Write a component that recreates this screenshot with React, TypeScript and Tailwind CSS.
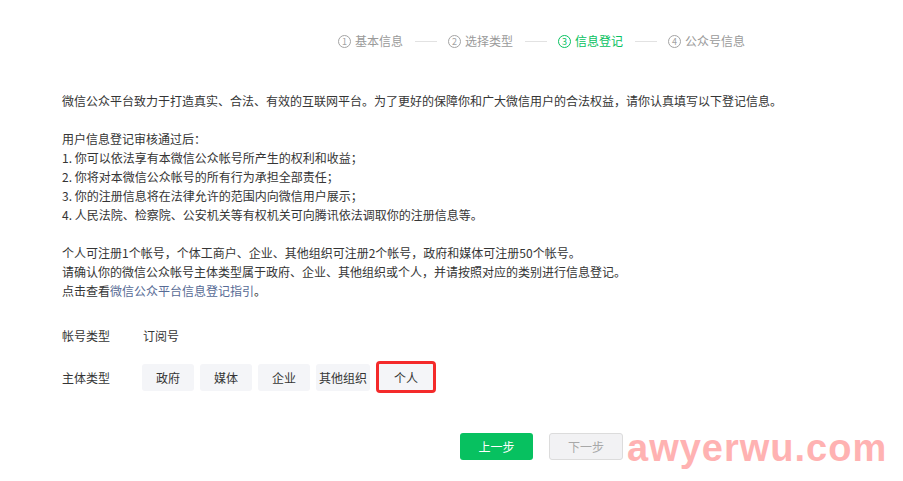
import React from "react";

const steps = [
  { n: "1", label: "基本信息" },
  { n: "2", label: "选择类型" },
  { n: "3", label: "信息登记", active: true },
  { n: "4", label: "公众号信息" },
];

const types = ["政府", "媒体", "企业", "其他组织"];

export default function App() {
  return (
    <div className="relative w-[903px] h-[481px] bg-white text-[#353535] font-['Noto_Sans_CJK_SC','Noto_Sans',sans-serif] overflow-hidden">
      {/* step indicator */}
      <div className="flex items-center pl-[338px] pt-[32px] h-[50px] text-[12px] leading-[18px]">
        {steps.map((s, i) => (
          <div key={s.n} className="flex items-center">
            {i > 0 && <div className="w-[22px] h-px bg-[#e2e2e2] ml-[12px] mr-[11px]" />}
            <span
              className={
                s.active
                  ? "flex items-center justify-center w-[13px] h-[13px] rounded-full border border-[#07c160] text-[9px] leading-none text-[#07c160]"
                  : "flex items-center justify-center w-[13px] h-[13px] rounded-full border border-[#a3a3a3] text-[9px] leading-none text-[#a3a3a3]"
              }
            >
              {s.n}
            </span>
            <span className={s.active ? "ml-[4px] text-[#07c160]" : "ml-[4px] text-[#9a9a9a]"}>
              {s.label}
            </span>
          </div>
        ))}
      </div>

      {/* notice */}
      <div className="pl-[62px] mt-[41px] text-[12px] leading-[19px]">
        <p>微信公众平台致力于打造真实、合法、有效的互联网平台。为了更好的保障你和广大微信用户的合法权益，请你认真填写以下登记信息。</p>
        <br />
        <p>用户信息登记审核通过后：</p>
        <p>1. 你可以依法享有本微信公众帐号所产生的权利和收益；</p>
        <p>2. 你将对本微信公众帐号的所有行为承担全部责任；</p>
        <p>3. 你的注册信息将在法律允许的范围内向微信用户展示；</p>
        <p>4. 人民法院、检察院、公安机关等有权机关可向腾讯依法调取你的注册信息等。</p>
        <br />
        <p>个人可注册1个帐号，个体工商户、企业、其他组织可注册2个帐号，政府和媒体可注册50个帐号。</p>
        <p>请确认你的微信公众帐号主体类型属于政府、企业、其他组织或个人，并请按照对应的类别进行信息登记。</p>
        <p>
          点击查看<a className="text-[#576b95]">微信公众平台信息登记指引</a>。
        </p>
      </div>

      {/* form */}
      <div className="pl-[62px] mt-[26px] text-[12px] leading-[19px]">
        <div className="flex items-center">
          <span className="w-[81px]">帐号类型</span>
          <span>订阅号</span>
        </div>
        <div className="flex items-center mt-[16px] h-[32px]">
          <span className="w-[80px]">主体类型</span>
          <div className="flex items-center gap-[6px]">
            {types.map((t) => (
              <button
                key={t}
                className="h-[27px] min-w-[52px] px-[3px] rounded-[3px] bg-[#f4f5f8] text-[12px] text-[#353535]"
              >
                {t}
              </button>
            ))}
            <div className="border-[3px] border-[#f42a2a] rounded-[4px]">
              <button className="h-[26px] w-[54px] rounded-[2px] bg-[#f4f5f8] text-[12px] text-[#353535]">
                个人
              </button>
            </div>
          </div>
        </div>
      </div>

      {/* actions */}
      <div className="flex items-center gap-[16px] pl-[460px] mt-[40px]">
        <button className="h-[27px] w-[73px] rounded-[3px] bg-[#07c160] text-[12px] text-white">
          上一步
        </button>
        <button className="h-[27px] w-[74px] rounded-[3px] border border-[#dcdcdc] bg-[#f2f2f4] text-[12px] text-[#a8a8a8]">
          下一步
        </button>
      </div>

      {/* watermark */}
      <div className="absolute left-[627px] top-[425px] text-[38px] leading-[46px] font-bold tracking-[1px] text-[#ffb2b2] font-['Liberation_Sans',sans-serif] pointer-events-none">
        awyerwu.com
      </div>
    </div>
  );
}
